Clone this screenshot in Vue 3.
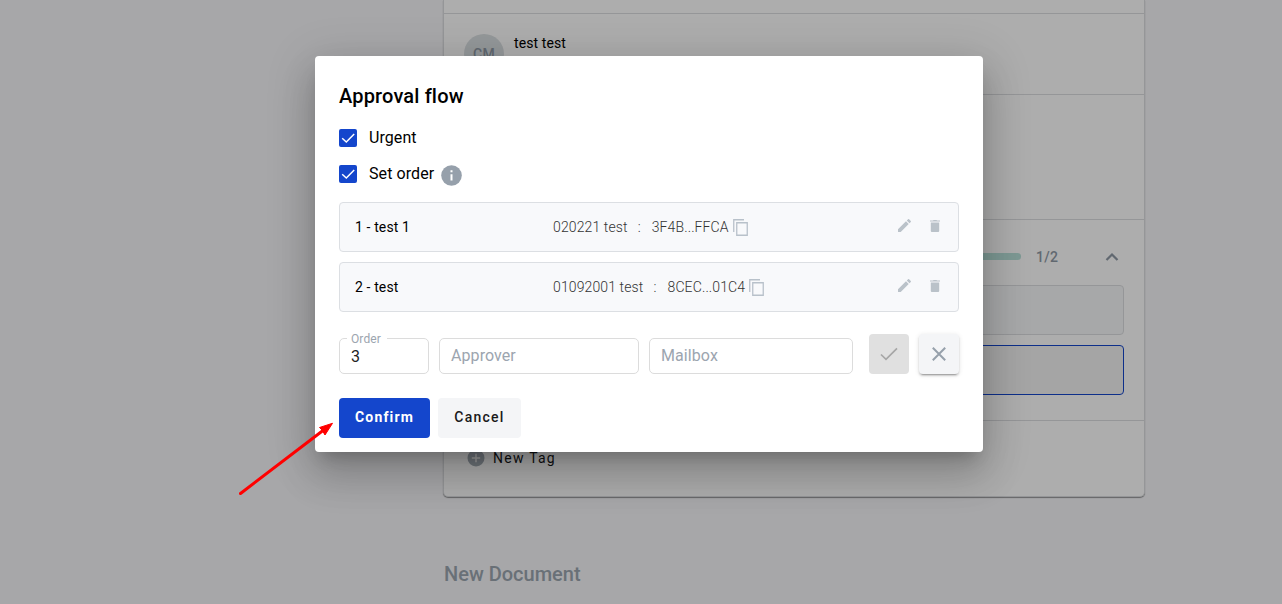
<script setup>
const approvers = [
  { id: 1, name: 'test 1', mailbox: '020221 test', hash: '3F4B...FFCA' },
  { id: 2, name: 'test', mailbox: '01092001 test', hash: '8CEC...01C4' },
]
const options = [
  { label: 'Urgent', info: false },
  { label: 'Set order', info: true },
]
</script>

<template>
  <div class="screen">
    <main class="page">
      <article class="card">
        <section class="sec lead"></section>
        <section class="sec person">
          <div class="avatar">CM</div>
          <span class="person-name">test test</span>
        </section>
        <section class="sec details"></section>
        <section class="sec approvals">
          <div class="progress-row">
            <div class="progress"></div>
            <span class="count">1/2</span>
            <svg class="chevron" viewBox="0 0 14 10"><path d="M1.500 8L7 2.500L12.500 8" /></svg>
          </div>
          <div class="box muted"></div>
          <div class="box active"></div>
        </section>
        <section class="tags">
          <svg class="plus" viewBox="0 0 18 18"><circle cx="9" cy="9" r="8.5" /><path d="M9 4.8V13.2M4.8 9H13.2" /></svg>
          <span>New Tag</span>
        </section>
      </article>
      <h2 class="next-title">New Document</h2>
    </main>

    <div class="overlay">
      <div class="dialog">
        <h1>Approval flow</h1>
        <label v-for="o in options" :key="o.label" class="option">
          <span class="checkbox"><svg viewBox="0 0 18 18"><path d="M3.200 9.300L7.300 13L15.200 5" /></svg></span>
          <span class="option-label">{{ o.label }}</span>
          <svg v-if="o.info" class="info" viewBox="0 0 21 21"><circle cx="10.5" cy="10.5" r="10.3" /><path d="M9.5 5.3H11.5V7.3H9.5ZM9.5 9.3H11.5V15.5H9.5Z" /></svg>
        </label>

        <div class="list">
          <div v-for="a in approvers" :key="a.id" class="item">
            <span class="item-name">{{ a.id }} - {{ a.name }}</span>
            <span class="item-mail">{{ a.mailbox }}</span>
            <span class="colon">:</span>
            <span class="item-hash">{{ a.hash }}</span>
            <svg class="copy" viewBox="0 0 16 18"><path d="M.75 13V.75H11" /><path d="M3.75 3.75H14.25V16.25H3.75Z" /></svg>
            <svg class="pencil" viewBox="3 3 18 18"><path d="M3 17.25V21h3.75L17.81 9.94l-3.75-3.75L3 17.25zM20.71 7.04a1 1 0 0 0 0-1.41l-2.34-2.34a1 1 0 0 0-1.41 0l-1.83 1.83 3.75 3.75 1.83-1.83z" /></svg>
            <svg class="trash" viewBox="0 0 10 12"><path d="M.800 2.600H9.200V11A1 1 0 0 1 8.200 12H1.800A1 1 0 0 1 .800 11ZM0 .600H3L3.500 0H6.500L7 .600H10V1.600H0Z" /></svg>
          </div>
        </div>

        <div class="form">
          <div class="field order"><span class="legend">Order</span><span class="value">3</span></div>
          <div class="field approver">Approver</div>
          <div class="field mailbox">Mailbox</div>
          <button class="icon-btn accept"><svg viewBox="0 0 18 14"><path d="M1 7.500L6 12.300L17 1.300" /></svg></button>
          <button class="icon-btn dismiss"><svg viewBox="0 0 14 14"><path d="M.8 .8L13.200 13.200M13.200 .8L.8 13.200" /></svg></button>
        </div>

        <div class="actions">
          <button class="btn confirm">Confirm</button>
          <button class="btn cancel">Cancel</button>
        </div>
      </div>
    </div>

    <svg class="arrow" viewBox="0 0 100 80"><path class="shaft" d="M5.500 73.500L88 10.500" /><path class="head" d="M97.500 3.300L84.500 7.500L87 10L90 15Z" /></svg>
  </div>
</template>

<style>
body { margin: 0; overflow: hidden; }
</style>

<style scoped>
* { box-sizing: border-box; }
.screen { position: relative; width: 1282px; height: 604px; overflow: hidden; background: #f6f6f9; font-family: Roboto, sans-serif; color: #000; }
svg { flex: none; display: block; }
button { font-family: inherit; border: 0; padding: 0; }
.page { padding-left: 443px; }
.card { width: 702px; height: 497px; background: #fff; border: 1px solid #dcdee0; border-top: 0; border-radius: 0 0 5px 5px; box-shadow: 0 1px 1px rgba(0, 0, 0, .4); }
.sec { border-bottom: 1px solid #dcdee0; }
.lead { height: 14px; }
.person { height: 81px; padding: 20px; display: flex; gap: 10px; }
.avatar { width: 40px; height: 40px; border-radius: 50%; background: #dbe0e3; color: #8f9aa6; font-size: 14px; font-weight: 500; letter-spacing: .2px; line-height: 40px; text-align: center; }
.person-name { font-size: 14px; line-height: 18px; letter-spacing: .1px; }
.details { height: 125px; }
.approvals { height: 201px; padding: 0 20px; }
.progress-row { height: 65px; padding-top: 8px; display: flex; align-items: center; padding-right: 5px; }
.progress { margin-left: 400px; width: 157px; height: 7px; border-radius: 4px; background: #b9e2da; }
.count { margin-left: 15px; width: 69px; font-size: 14px; font-weight: 500; color: #8f9aa6; letter-spacing: .3px; }
.chevron { width: 14px; height: 10px; fill: none; stroke: #8f9aa6; stroke-width: 2.2; }
.box { height: 50px; border-radius: 4px; border: 1px solid #dcdee0; margin-bottom: 10px; }
.muted { background: #f7f8fa; }
.active { background: #f4f4f4; border-color: #1446cc; }
.tags { height: 74px; padding-left: 23px; display: flex; align-items: center; gap: 8px; font-size: 14px; font-weight: 400; letter-spacing: 1.25px; color: #17191c; }
.plus { width: 18px; height: 18px; fill: #a4adb6; }
.plus path { stroke: #f0f0f0; stroke-width: 1.4; }
.next-title { margin: 65px 0 0 1px; font-size: 20px; line-height: 24px; font-weight: 500; color: #9ba6b0; }
.overlay { position: absolute; inset: 0; background: rgba(0, 0, 0, .32); padding: 56px 0 0 315px; }
.dialog { width: 668px; height: 396px; padding: 24px 24px 0; background: #fff; border-radius: 4px; box-shadow: 0 11px 15px -7px rgba(0, 0, 0, .2), 0 24px 38px 3px rgba(0, 0, 0, .14), 0 9px 46px 8px rgba(0, 0, 0, .12); }
h1 { margin: 0; font-size: 20px; font-weight: 500; line-height: 32px; height: 40px; letter-spacing: .16px; }
.option { height: 36px; display: flex; align-items: center; font-size: 16px; }
.checkbox { width: 18px; height: 18px; border-radius: 2px; background: #1446cc; margin-right: 12px; }
.checkbox path { fill: none; stroke: #fff; stroke-width: 1.5; }
.option-label { line-height: 20px; letter-spacing: .08px; }
.info { width: 21px; height: 21px; margin-left: 7px; margin-top: 2px; fill: #96a0ab; }
.info path { fill: #fff; }
.list { padding-top: 10px; display: grid; gap: 10px; }
.item { height: 50px; border: 1px solid #dcdfe3; border-radius: 4px; background: #f8f9fb; padding: 0 16px 0 15px; display: flex; align-items: center; font-size: 14px; color: #333; font-weight: 300; letter-spacing: .12px; }
.item-name { width: 198px; color: #000; font-weight: 400; }
.colon { margin: 0 11px 0 10px; }
.copy { width: 16px; height: 18px; margin-left: 4px; margin-top: 2px; fill: none; stroke: #b8c1ca; stroke-width: 1.3; }
.pencil { width: 13px; height: 13px; margin: -3px 19px 0 auto; fill: #bac2c9; }
.trash { width: 10px; height: 12px; margin-top: -2px; margin-right: 2px; fill: #bac2c9; }
.form { margin-top: 22px; display: flex; }
.field { position: relative; height: 36px; margin-top: 4px; border: 1px solid #dcdcdc; border-radius: 5px; padding-left: 11px; line-height: 33px; font-size: 16px; color: #9ca5af; }
.order { width: 90px; margin-right: 10px; }
.legend { position: absolute; left: 7px; top: -8px; padding: 0 6px 0 4px; background: #fff; font-size: 12px; line-height: 16px; letter-spacing: .1px; }
.value { color: #222; line-height: 35px; }
.approver { width: 200px; margin-right: 10px; letter-spacing: .08px; }
.mailbox { width: 204px; margin-right: 16px; letter-spacing: .08px; }
.icon-btn { width: 40px; height: 40px; border-radius: 4px; display: grid; place-items: center; }
.icon-btn svg { fill: none; stroke-width: 2; }
.accept { background: #e0e0e0; margin-right: 10px; }
.accept svg { width: 18px; height: 14px; stroke: #a6a6a6; stroke-width: 1.7; }
.dismiss { background: #f4f5f7; box-shadow: 0 3px 1px -2px rgba(0, 0, 0, .2), 0 2px 2px rgba(0, 0, 0, .14), 0 1px 5px rgba(0, 0, 0, .12); }
.dismiss svg { width: 14px; height: 14px; stroke: #96a0ab; }
.actions { margin-top: 24px; display: flex; gap: 8px; }
.btn { height: 40px; border-radius: 4px; font-size: 14px; padding-bottom: 2px; }
.confirm { width: 91px; background: #1446cc; color: #fff; font-weight: 700; letter-spacing: 1.15px; }
.cancel { width: 83px; background: #f4f5f7; color: #1a1a1a; font-weight: 500; letter-spacing: 1.25px; }
.arrow { position: absolute; left: 235px; top: 420px; width: 100px; height: 80px; }
.shaft { fill: none; stroke: #f00; stroke-width: 3; stroke-linecap: round; }
.head { fill: #f00; stroke: #f00; stroke-width: 1; }
</style>
